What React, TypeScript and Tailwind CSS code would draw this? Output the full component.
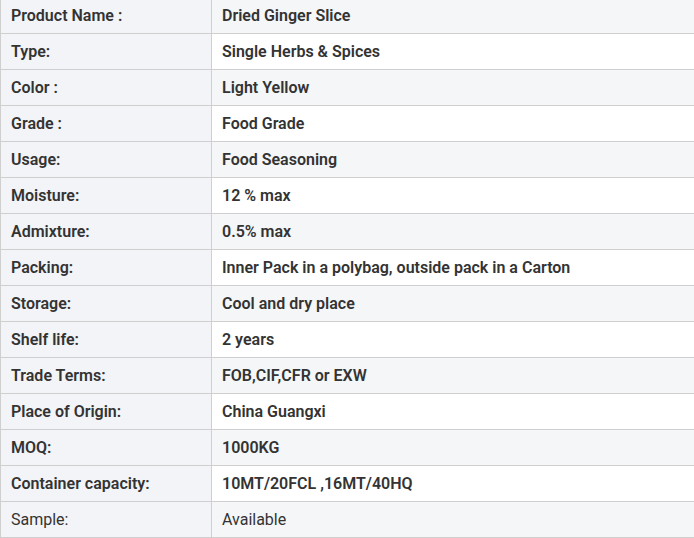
const rows: [string, string][] = [
  ["Product Name :", "Dried Ginger Slice"],
  ["Type:", "Single Herbs & Spices"],
  ["Color :", "Light Yellow"],
  ["Grade :", "Food Grade"],
  ["Usage:", "Food Seasoning"],
  ["Moisture:", "12 % max"],
  ["Admixture:", "0.5% max"],
  ["Packing:", "Inner Pack in a polybag, outside pack in a Carton"],
  ["Storage:", "Cool and dry place"],
  ["Shelf life:", "2 years"],
  ["Trade Terms:", "FOB,CIF,CFR or EXW"],
  ["Place of Origin:", "China Guangxi"],
  ["MOQ:", "1000KG"],
  ["Container capacity:", "10MT/20FCL ,16MT/40HQ"],
];

export default function App() {
  return (
    <div className="w-[694px] h-[538px] overflow-hidden bg-white" style={{ fontFamily: "Roboto, 'Liberation Sans', sans-serif" }}>
      <div className="-mt-[3px] w-[700px] border border-[#cfcfcf] text-[16px] text-[#333]">
        {rows.map(([k, v], i) => (
          <div key={i} className="flex h-[36px] border-b border-[#cfcfcf]">
            <div className="w-[211px] shrink-0 border-r border-[#cfcfcf] bg-[#f3f4f7] pl-[10px] pt-[1px] flex items-center font-semibold">{k}</div>
            <div className={`flex-1 pl-[10px] pt-[1px] flex items-center font-semibold ${i % 2 === 0 ? "bg-[#f5f6f8]" : "bg-white"}`}>{v}</div>
          </div>
        ))}
        <div className="flex h-[35px]">
          <div className="w-[211px] shrink-0 border-r border-[#cfcfcf] bg-[#f3f4f7] pl-[10px] pt-[1px] flex items-center">Sample:</div>
          <div className="flex-1 pl-[10px] pt-[1px] flex items-center bg-[#f5f6f8]">Available</div>
        </div>
      </div>
    </div>
  );
}
